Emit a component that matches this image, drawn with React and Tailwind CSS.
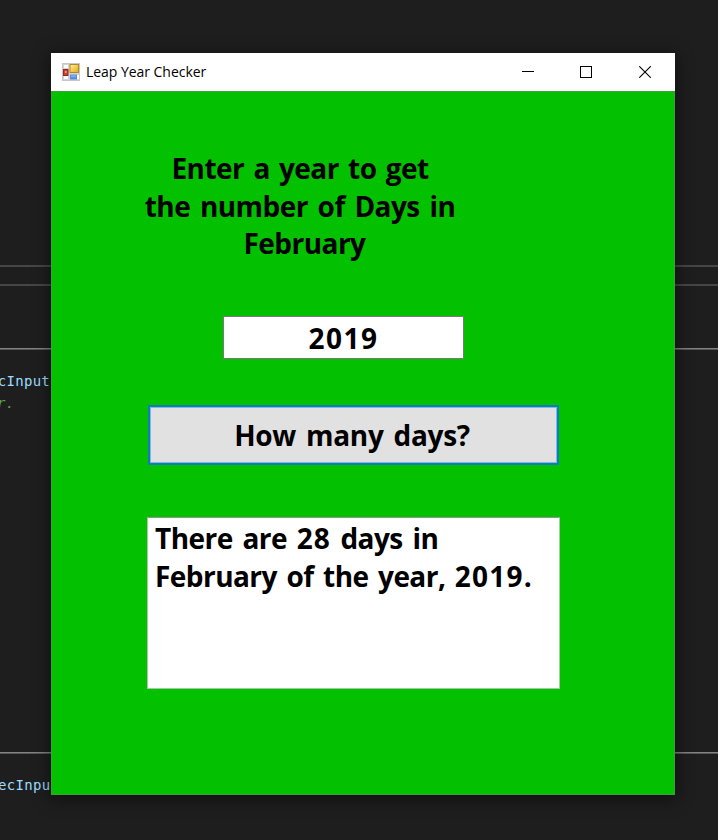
const BOLD = "font-['Open_Sans','Noto_Sans',sans-serif] font-bold text-black whitespace-nowrap";

function FormIcon() {
  return (
    <svg width="18" height="18" viewBox="0 0 18 18" aria-hidden="true">
      <defs>
        <linearGradient id="gold" x1="0" y1="0" x2="1" y2="1">
          <stop offset="0" stopColor="#fff0a0" />
          <stop offset="1" stopColor="#e0aa10" />
        </linearGradient>
        <linearGradient id="blue" x1="0" y1="0" x2="0" y2="1">
          <stop offset="0" stopColor="#9cc8ff" />
          <stop offset="1" stopColor="#3a78d8" />
        </linearGradient>
      </defs>
      <rect x="0.5" y="0.5" width="17" height="17" fill="#d4d4d6" stroke="#c6c6c8" />
      <path d="M2 2h4v3H2zM2 13h4v3H2zM15 12h2v4h-2z" fill="#fff" />
      <rect x="1.5" y="6.5" width="4.5" height="6" fill="#c8402e" stroke="#96281e" />
      <rect x="3" y="8" width="1.6" height="2" fill="#f0a090" />
      <rect x="8" y="1.5" width="8.5" height="8" fill="url(#gold)" stroke="#b8861c" />
      <rect x="8.5" y="12" width="6" height="4" fill="url(#blue)" stroke="#5a8cd0" />
    </svg>
  );
}

function TitleBar() {
  return (
    <header className="flex h-[38px] items-center bg-white pl-[11px] text-black">
      <FormIcon />
      <h1 className="ml-[6px] flex-1 whitespace-nowrap font-['Open_Sans','Noto_Sans',sans-serif] text-[14px] leading-5 tracking-[-0.04px]">
        Leap Year Checker
      </h1>
      <div className="flex">
        <button className="flex h-[38px] w-[58px] items-center justify-center" aria-label="Minimize">
          <svg width="12" height="12" shapeRendering="crispEdges">
            <rect x="0" y="5" width="12" height="1" />
          </svg>
        </button>
        <button className="flex h-[38px] w-[58px] items-center justify-center" aria-label="Maximize">
          <svg width="12" height="12" fill="none" stroke="#000">
            <rect x="0.5" y="0.5" width="11" height="11" />
          </svg>
        </button>
        <button className="flex h-[38px] w-[60px] items-center justify-center" aria-label="Close">
          <svg width="12" height="12" fill="none" stroke="#000" strokeWidth="1.1">
            <path d="M0.2 0.2L11.8 11.8M11.8 0.2L0.2 11.8" />
          </svg>
        </button>
      </div>
    </header>
  );
}

function EditorBackdrop() {
  return (
    <div className="flex h-full flex-col font-['DejaVu_Sans_Mono',monospace] text-[14px] leading-5 tracking-[0.3px] text-[#9cdcfe]">
      <div className="mt-[265px] h-[2px] shrink-0 bg-[#464646]" />
      <div className="mt-[17px] h-[2px] shrink-0 bg-[#464646]" />
      <div className="mt-[62px] h-[2px] shrink-0 border-t border-[#848484] bg-[#565656]" />
      <div className="-ml-[11px] mt-[21px] h-5 whitespace-pre">ecInput</div>
      <div className="-ml-[3px] mt-[2px] h-5 whitespace-pre italic text-[#57a64a]">r.</div>
      <div className="mt-[339px] h-[2px] shrink-0 border-t border-[#848484] bg-[#565656]" />
      <div className="-ml-[2px] mt-[21px] h-5 whitespace-pre">ecInpu</div>
    </div>
  );
}

export default function App() {
  return (
    <main className="relative h-[840px] w-[718px] overflow-hidden bg-[#1e1e1e]">
      <EditorBackdrop />
      <section className="absolute left-[51px] top-[53px] flex h-[742px] w-[624px] flex-col bg-[#04c100] shadow-[0_3px_16px_2px_rgba(0,0,0,0.45)]">
        <TitleBar />
        <div className="flex flex-1 flex-col items-start border border-[#3f9e3d]">
          <div
            className={`${BOLD} ml-[78px] mt-[58px] flex h-[114px] w-[340px] flex-col items-center text-[28px] leading-[37.5px] tracking-[-0.55px]`}
          >
            <span className="[word-spacing:2.5px]">Enter a year to get</span>
            <span className="[word-spacing:3px]">the number of Days in</span>
            <span className="mr-[-9px]">February</span>
          </div>
          <input
            className={`${BOLD} ml-[171px] mt-[52px] h-[43px] w-[241px] border border-[#7a7a7a] bg-white text-center text-[28px] leading-[38px] tracking-[1.5px] outline-none`}
            defaultValue="2019"
          />
          <button
            className={`${BOLD} ml-[96px] mt-[46px] h-[60px] w-[411px] border-2 border-[#0d7fb5] bg-[#e1e1e1] pr-[3px] text-[28px] leading-[38px] tracking-[-0.3px] shadow-[inset_0_0_0_1px_#7fb8e8] [word-spacing:3px]`}
          >
            How many days?
          </button>
          <div
            className={`${BOLD} ml-[95px] mt-[52px] flex h-[172px] w-[413px] flex-col items-start border border-[#a8c8a8] border-t-[#8a9a8a] bg-white pl-[7px] pt-[1px] text-[28px] leading-[38px] tracking-[-0.55px]`}
          >
            <span className="[word-spacing:3px]">
              There are <span className="tracking-[1px]">28</span> days in
            </span>
            <span className="[word-spacing:2.8px]">
              February of the year, <span className="tracking-[1.2px]">2019</span>.
            </span>
          </div>
        </div>
      </section>
    </main>
  );
}
